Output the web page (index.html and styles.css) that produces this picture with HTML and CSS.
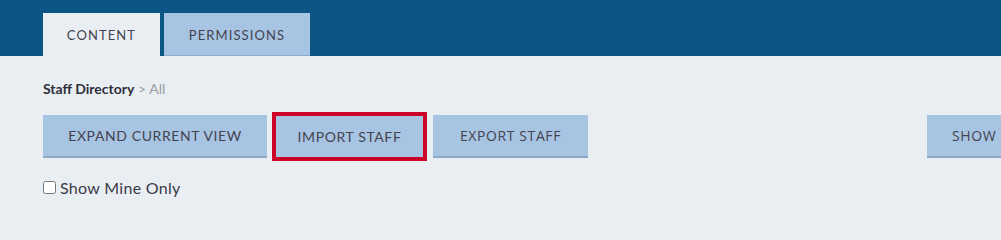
FILE: index.html
```html
<!DOCTYPE html>
<html>
<head>
<meta charset="utf-8">
<link rel="stylesheet" href="styles.css">
</head>
<body>
<header class="topbar">
  <nav class="tabs">
    <div class="tab tab-active">CONTENT</div>
    <div class="tab tab-inactive">PERMISSIONS</div>
  </nav>
</header>
<main class="main">
  <div class="breadcrumb"><span class="crumb-strong">Staff Directory</span><span class="crumb-rest"> &gt; All</span></div>
  <div class="toolbar">
    <button class="btn btn-expand">EXPAND CURRENT VIEW</button>
    <div class="highlight"><button class="btn btn-import">IMPORT STAFF</button></div>
    <button class="btn btn-alt btn-export">EXPORT STAFF</button>
    <button class="btn btn-alt btn-show">SHOW</button>
  </div>
  <label class="check-row"><input type="checkbox" class="check"><span>Show Mine Only</span></label>
</main>
</body>
</html>
```

FILE: styles.css
```css
html, body {
  margin: 0;
  padding: 0;
}
body {
  width: 1001px;
  height: 210px;
  overflow: hidden;
  background: #e9eef3;
  font-family: "Lato", "Open Sans", sans-serif;
  color: #3b3a48;
}
.topbar {
  background: #0b5587;
  height: 56px;
  box-sizing: border-box;
  padding: 13px 0 0 43px;
}
.tabs {
  display: flex;
  gap: 4px;
  height: 43px;
}
.tab {
  display: flex;
  align-items: center;
  justify-content: center;
  box-sizing: border-box;
  height: 43px;
  font-size: 13px;
  letter-spacing: 1.1px;
  color: #44434f;
  padding-top: 1px;
}
.tab-active {
  width: 117px;
  background: #e9eef3;
}
.tab-inactive {
  width: 146px;
  background: #a7c4e2;
  border-bottom: 1px solid #8eaccd;
}
.main {
  padding: 23px 0 0 43px;
}
.breadcrumb {
  font-size: 14px;
  line-height: 20px;
  height: 20px;
}
.crumb-strong {
  font-weight: 700;
  color: #2f2e3a;
}
.crumb-rest {
  color: #9a9ca3;
}
.toolbar {
  display: flex;
  align-items: center;
  margin-top: 13px;
  height: 49px;
}
.btn {
  flex-shrink: 0;
  height: 43px;
  box-sizing: border-box;
  border: 0;
  border-bottom: 2px solid #8ea9c6;
  background: #a7c4e2;
  font-family: "Lato", "Open Sans", sans-serif;
  font-size: 14px;
  letter-spacing: 0.6px;
  color: #44434f;
  padding: 0;
  white-space: nowrap;
  text-align: center;
}
.btn-expand {
  width: 224px;
}
.highlight {
  margin-left: 5px;
  width: 155px;
  height: 49px;
  box-sizing: border-box;
  border: 4px solid #cc0228;
  display: flex;
}
.btn-import {
  width: 147px;
  height: 41px;
  border-bottom: 0;
}
.btn-alt {
  font-family: "Open Sans", "Noto Sans", sans-serif;
  font-size: 14px;
  letter-spacing: 0.6px;
}
.btn-export {
  width: 155px;
  margin-left: 6px;
}
.btn-show {
  margin-left: 339px;
  padding: 0 40px 0 25px;
  text-align: left;
}
.check-row {
  display: flex;
  align-items: center;
  margin-top: 16px;
  height: 20px;
  font-size: 16px;
  letter-spacing: 0.3px;
  color: #3b3a48;
}
.check {
  margin: 0 4px 0 0;
  width: 13px;
  height: 13px;
}
```
